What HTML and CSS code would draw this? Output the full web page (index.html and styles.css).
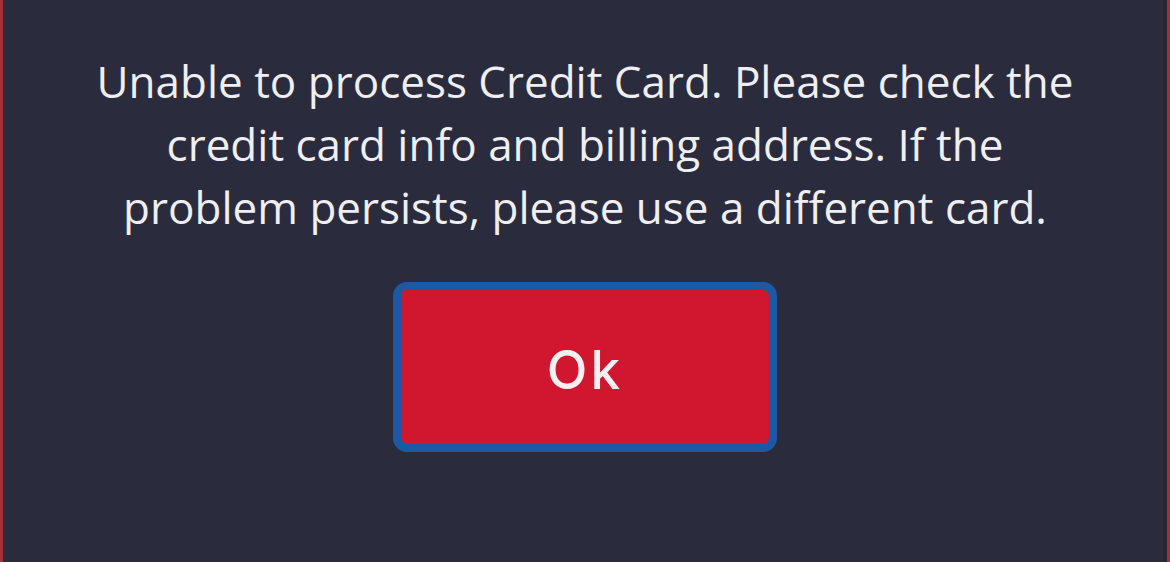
FILE: index.html
```html
<!DOCTYPE html>
<html lang="en">
<head>
  <meta charset="UTF-8" />
  <meta name="viewport" content="width=device-width, initial-scale=1.0" />
  <title>Payment Error</title>
  <link rel="stylesheet" href="styles.css">
</head>

<body>
  <div class="dialog">
    <p class="message">Unable to process Credit Card. Please check the credit card info and billing address. If the problem persists, please use a different card.</p>
    <button class="btn-ok">Ok</button>
  </div>
</body>
</html>
```

FILE: styles.css
```css
html, body {
  margin: 0;
  height: 100%;
}

body {
  background: #2a2b3c;
  font-family: 'Open Sans', sans-serif;
}

.dialog {
  box-sizing: border-box;
  height: 100%;
  border-left: 3px solid #a4303a;
  border-right: 3px solid #a4303a;
  box-shadow: inset -4px 0 0 #262635;
  display: flex;
  flex-direction: column;
  align-items: center;
  padding-top: 50px;
}

.message {
  margin: 0;
  width: 1000px;
  color: #eeeef3;
  font-size: 44px;
  line-height: 63px;
  text-align: center;
}

.btn-ok {
  margin-top: 43px;
  width: 384px;
  height: 170px;
  padding: 6px 0 0;
  background: #d11730;
  border: 8px solid #1d58a5;
  border-radius: 14px;
  color: #f4f1f2;
  font-family: 'Inter', sans-serif;
  font-size: 53px;
  font-weight: 500;
  letter-spacing: 3px;
  cursor: pointer;
}
```
